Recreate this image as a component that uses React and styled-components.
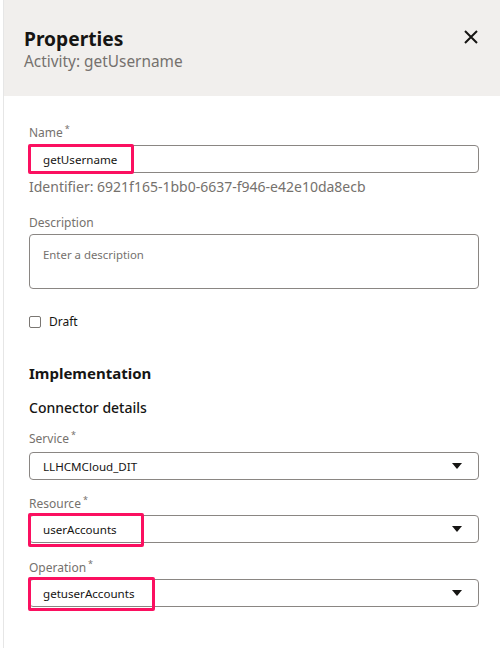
import React from 'react';
import styled, { createGlobalStyle } from 'styled-components';

const GlobalStyle = createGlobalStyle`
  html, body {
    margin: 0;
    padding: 0;
    background: #ffffff;
  }
  body {
    font-family: 'Noto Sans', 'Open Sans', sans-serif;
    color: #161513;
  }
`;

const Panel = styled.div`
  margin-left: 3px;
  min-height: 648px;
  border-left: 1px solid #e6e6e6;
  box-sizing: border-box;
`;

const Header = styled.div`
  background: #f1efed;
  height: 96px;
  box-sizing: border-box;
  padding: 26px 20px 0 20px;
  display: flex;
  justify-content: space-between;
  align-items: flex-start;
`;

const Title = styled.h1`
  margin: 0;
  font-size: 19.2px;
  line-height: 26px;
  font-weight: 700;
  color: #161513;
`;

const Subtitle = styled.div`
  font-size: 15.4px;
  line-height: 20px;
  color: #75716d;
`;

const CloseButton = styled.button`
  border: 0;
  background: transparent;
  padding: 0;
  margin: 3px 1px 0 0;
  width: 16px;
  height: 16px;
  cursor: pointer;
  display: flex;
`;

const Body = styled.div`
  padding: 29px 21px 0 25px;
`;

const Label = styled.div`
  font-size: 12px;
  line-height: 16px;
  color: #75716d;
  margin-top: ${props => props.$top || 0}px;
  margin-bottom: ${props => props.$gap || 3}px;

  sup {
    font-size: 9px;
    margin-left: 2px;
    vertical-align: 5px;
    line-height: 0;
  }
`;

const FieldBox = styled.div`
  position: relative;
  height: 28px;
  box-sizing: border-box;
  border: 1px solid #8a8683;
  border-radius: 4px;
  display: flex;
  align-items: center;
  padding: 0 16px 0 13px;
  font-size: 11.6px;
  color: #161513;
  justify-content: space-between;
`;

const Highlight = styled.div`
  position: absolute;
  left: -2px;
  top: ${props => props.$top || -2}px;
  width: ${props => props.$w}px;
  height: ${props => props.$h || 30}px;
  border: 3px solid #fb1060;
  border-radius: 2px;
  box-sizing: border-box;
  pointer-events: none;
`;

const Hint = styled.div`
  margin-top: 4px;
  font-size: 14px;
  line-height: 20px;
  color: #75716d;
`;

const TextArea = styled.div`
  height: 55px;
  box-sizing: border-box;
  border: 1px solid #8a8683;
  border-radius: 4px;
  padding: 12px 13px;
  font-size: 11.4px;
  line-height: 16px;
  color: #75716d;
`;

const CheckRow = styled.label`
  margin-top: 23px;
  display: flex;
  align-items: center;
  gap: 8px;
  font-size: 12px;
  line-height: 20px;
  color: #161513;
`;

const Box = styled.span`
  width: 12px;
  height: 12px;
  box-sizing: border-box;
  border: 1.5px solid #7a7672;
  border-radius: 2px;
  display: inline-block;
`;

const Section = styled.h2`
  margin: 30px 0 0 0;
  font-size: 15px;
  line-height: 22px;
  font-weight: 700;
  color: #161513;
`;

const SubSection = styled.h3`
  margin: 14px 0 0 0;
  font-size: 14px;
  line-height: 20px;
  font-weight: 500;
  color: #161513;
`;

const Arrow = styled.span`
  width: 0;
  height: 0;
  border-left: 5px solid transparent;
  border-right: 5px solid transparent;
  border-top: 6px solid #161513;
`;

const Close = () => (
  <svg width="16" height="16" viewBox="0 0 16 16">
    <path d="M2 2 L14 14 M14 2 L2 14" stroke="#161513" strokeWidth="2" fill="none" />
  </svg>
);

const Select = ({ value, mark }) => (
  <FieldBox>
    <span>{value}</span>
    <Arrow />
    {mark && <Highlight $w={mark} $h={34} $top={-3} />}
  </FieldBox>
);

export default function App() {
  return (
    <>
      <GlobalStyle />
      <Panel>
        <Header>
          <div>
            <Title>Properties</Title>
            <Subtitle>Activity: getUsername</Subtitle>
          </div>
          <CloseButton aria-label="Close">
            <Close />
          </CloseButton>
        </Header>
        <Body>
          <Label $gap={4}>Name<sup>*</sup></Label>
          <FieldBox>
            <span>getUsername</span>
            <Highlight $w={106} />
          </FieldBox>
          <Hint>Identifier: 6921f165-1bb0-6637-f946-e42e10da8ecb</Hint>

          <Label $top={18}>Description</Label>
          <TextArea>Enter a description</TextArea>

          <CheckRow>
            <Box />
            Draft
          </CheckRow>

          <Section>Implementation</Section>
          <SubSection>Connector details</SubSection>

          <Label $top={13} $gap={5}>Service<sup>*</sup></Label>
          <Select value="LLHCMCloud_DIT" />

          <Label $top={16}>Resource<sup>*</sup></Label>
          <Select value="userAccounts" mark={116} />

          <Label $top={17}>Operation<sup>*</sup></Label>
          <Select value="getuserAccounts" mark={127} />
        </Body>
      </Panel>
    </>
  );
}
